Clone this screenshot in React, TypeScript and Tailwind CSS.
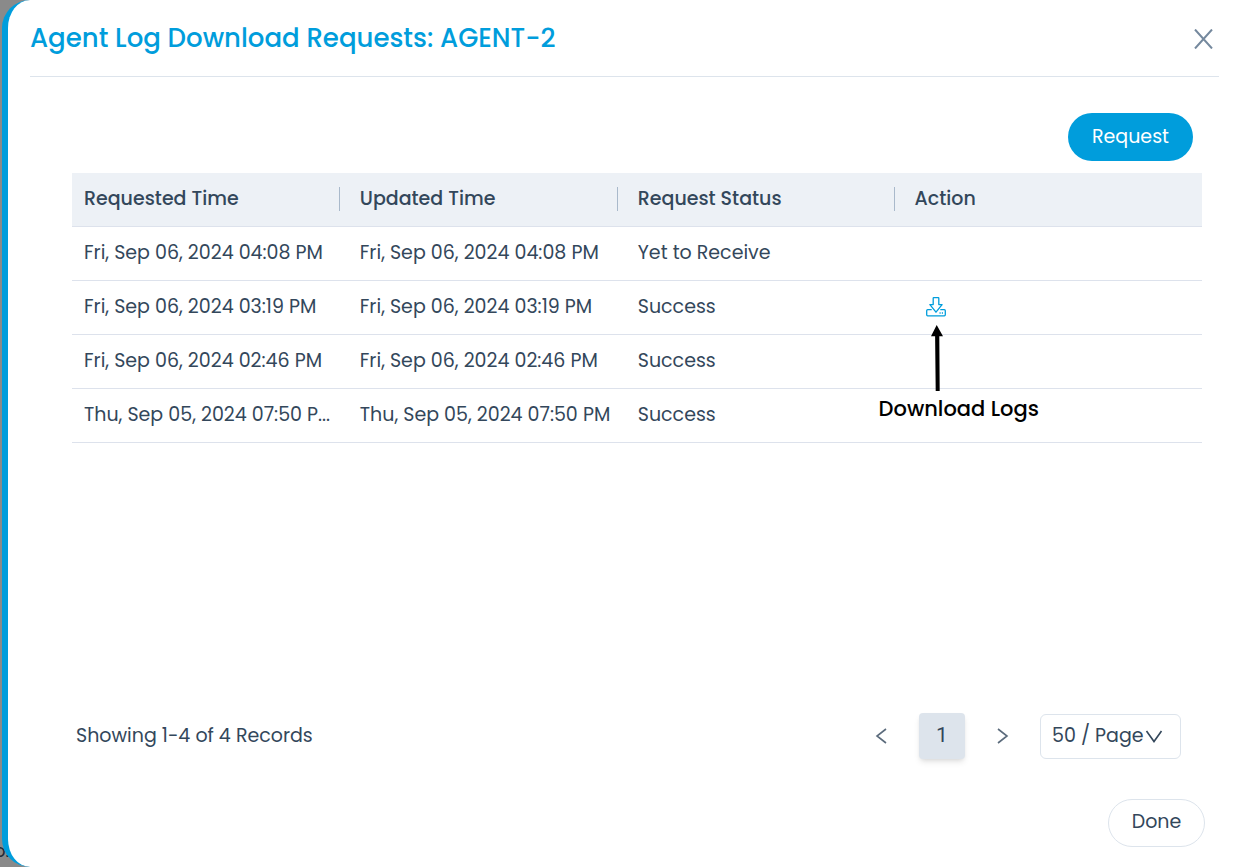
import React from "react";

const requests = [
  {
    requested: "Fri, Sep 06, 2024 04:08 PM",
    updated: "Fri, Sep 06, 2024 04:08 PM",
    status: "Yet to Receive",
    downloadable: false,
  },
  {
    requested: "Fri, Sep 06, 2024 03:19 PM",
    updated: "Fri, Sep 06, 2024 03:19 PM",
    status: "Success",
    downloadable: true,
  },
  {
    requested: "Fri, Sep 06, 2024 02:46 PM",
    updated: "Fri, Sep 06, 2024 02:46 PM",
    status: "Success",
    downloadable: false,
  },
  {
    requested: "Thu, Sep 05, 2024 07:50 P...",
    updated: "Thu, Sep 05, 2024 07:50 PM",
    status: "Success",
    downloadable: false,
  },
];

const DownloadIcon = () => (
  <svg width="20" height="20" viewBox="0 0 20 20" fill="none" stroke="#009ddc" strokeWidth="1.3" strokeLinejoin="round">
    <path d="M5.7 12.7H1.7a1 1 0 0 0-1 1v4.1a1 1 0 0 0 1 1h16.6a1 1 0 0 0 1-1v-4.1a1 1 0 0 0-1-1h-4" />
    <path d="M7.2 1.2a.5.5 0 0 1 .5-.5h4.6a.5.5 0 0 1 .5.5v6.4h3.3L10 15.2 3.9 7.6h3.3z" />
    <path d="M13.5 16h1.2M15.8 16H17" />
  </svg>
);

const DownloadHint = () => (
  <div className="pointer-events-none absolute top-11 -left-4">
    <svg className="ml-[52px]" width="12" height="66" viewBox="0 0 12 66" fill="#000">
      <path d="M5.7 0 0 11.3h4.1L4.7 66h4l-.4-54.7H12z" />
    </svg>
    <span className="mt-1 block text-[21px] leading-7 font-medium whitespace-nowrap text-black">Download Logs</span>
  </div>
);

const Header = () => (
  <header className="flex h-[77px] items-center justify-between border-b border-[#dde4ec] pr-1.5">
    <h1 className="text-[26px] leading-10 font-medium text-[#009ddc]">Agent Log Download Requests: AGENT-2</h1>
    <button type="button" aria-label="Close" className="pt-0.5">
      <svg width="19" height="20" viewBox="0 0 19 20" fill="none" stroke="#75899e" strokeWidth="2">
        <path d="M1 .5 18 19.5M18 .5 1 19.5" />
      </svg>
    </button>
  </header>
);

const RequestTable = () => (
  <table className="w-full table-fixed border-collapse text-left text-[19px] leading-7 text-[#33475b]">
    <thead>
      <tr className="h-[53px] border-b border-[#dde2ec] bg-[#edf1f6]">
        <th className="w-[23.7%] p-0 pl-3 font-medium">
          <div className="h-6 border-r border-[#a9b9cb] leading-6">Requested Time</div>
        </th>
        <th className="w-[24.6%] p-0 pl-5 font-medium">
          <div className="h-6 border-r border-[#a9b9cb] leading-6">Updated Time</div>
        </th>
        <th className="w-[24.5%] p-0 pl-5 font-medium">
          <div className="h-6 border-r border-[#a9b9cb] leading-6">Request Status</div>
        </th>
        <th className="p-0 pl-5 font-medium">
          <div className="h-6 leading-6">Action</div>
        </th>
      </tr>
    </thead>
    <tbody>
      {requests.map((row) => (
        <tr key={row.requested} className="h-[54px] border-b border-[#dde2ec]">
          <td className="truncate p-0 pl-3">{row.requested}</td>
          <td className="p-0 pl-5 whitespace-nowrap">{row.updated}</td>
          <td className="p-0 pl-5">{row.status}</td>
          <td className="relative p-0 pl-[31px]">
            {row.downloadable && (
              <>
                <button type="button" aria-label="Download logs" className="block">
                  <DownloadIcon />
                </button>
                <DownloadHint />
              </>
            )}
          </td>
        </tr>
      ))}
    </tbody>
  </table>
);

const Pagination = () => (
  <div className="flex items-center justify-between pr-[21px] pl-1 text-[#33475b]">
    <p className="text-[19px] leading-7">Showing 1-4 of 4 Records</p>
    <div className="flex items-center">
      <button type="button" aria-label="Previous page">
        <svg width="12" height="16" viewBox="0 0 12 16" fill="none" stroke="#5b6b7c" strokeWidth="1.6">
          <path d="M11 1 2 8l9 7" />
        </svg>
      </button>
      <button
        type="button"
        aria-current="page"
        className="mx-8 h-[46px] w-[46px] rounded bg-[#dde4ec] font-[Roboto,sans-serif] text-[21px] shadow-md"
      >
        1
      </button>
      <button type="button" aria-label="Next page">
        <svg width="12" height="16" viewBox="0 0 12 16" fill="none" stroke="#5b6b7c" strokeWidth="1.6">
          <path d="m1 1 9 7-9 7" />
        </svg>
      </button>
      <div className="relative ml-[31px]">
        <select
          aria-label="Records per page"
          className="block h-[45px] w-[141px] appearance-none rounded-md border border-[#dde4ec] bg-white pl-[11px] text-[19px]"
        >
          <option>50 / Page</option>
        </select>
        <svg
          className="pointer-events-none absolute top-4 right-[18px]"
          width="18"
          height="13"
          viewBox="0 0 18 13"
          fill="none"
          stroke="#33475b"
          strokeWidth="1.6"
        >
          <path d="M1.500 1 9 11.500 16.500 1" />
        </svg>
      </div>
    </div>
  </div>
);

export default function App() {
  return (
    <div className="relative flex min-h-screen overflow-hidden bg-[#8a8a8a] pl-0.5 font-[Poppins,Inter,sans-serif]">
      <span className="absolute bottom-1 -left-1.5 text-[18px] leading-6 text-[#1f2937]">o.</span>
      <section className="relative flex flex-1 flex-col rounded-l-[28px] border-l-[6px] border-[#009ddc] bg-white pr-[21px] pb-5 pl-[22px]">
        <Header />
        <main className="flex flex-1 flex-col pt-9 pr-[17px] pl-[42px]">
          <button
            type="button"
            className="mr-[9px] mb-3 h-12 w-[125px] self-end rounded-full bg-[#009ddc] text-[19px] text-white"
          >
            Request
          </button>
          <div className="flex-1">
            <RequestTable />
          </div>
          <Pagination />
        </main>
        <footer className="flex justify-end pt-10 pr-3.5">
          <button
            type="button"
            className="h-12 w-[97px] rounded-full border border-[#dde4ec] bg-white pb-0.5 text-[19px] text-[#33475b]"
          >
            Done
          </button>
        </footer>
      </section>
    </div>
  );
}
